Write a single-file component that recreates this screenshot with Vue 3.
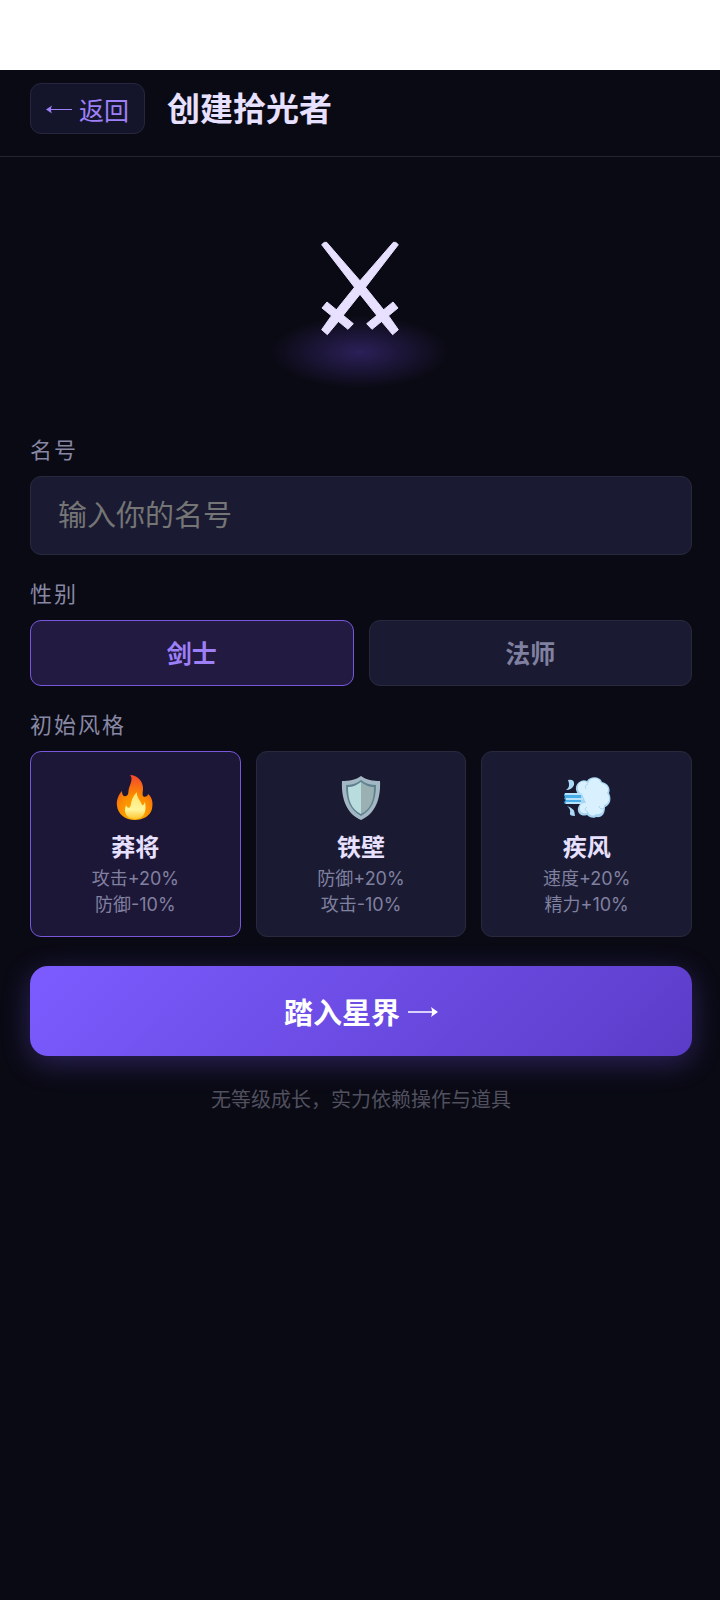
<template>
  <div class="screen">
    <header class="topbar">
      <button class="back-btn" type="button">
        <svg class="back-arrow" viewBox="0 0 26 12" fill="none" stroke="currentColor" stroke-width="1" aria-hidden="true">
          <path d="M2 6.5H26" />
          <path d="M0 6.5L6 2.5Q4 6.5 6 10.5Z" fill="currentColor" stroke="none" />
        </svg>
        <span>返回</span>
      </button>
      <h1 class="title">创建拾光者</h1>
    </header>
    <main>
      <div class="hero">
        <div class="hero-icon">
          <div class="glow"></div>
          <svg class="swords" viewBox="20 17 234 285" fill="currentColor" stroke="currentColor" stroke-width="3" aria-hidden="true">
            <path d="M22 28Q30 18 37 21L148 149L226 246L252 283L235 298L203 260L126 163Z" />
            <path d="M157 265L236 200L251 218L173 282Z" />
            <g transform="translate(274 0) scale(-1 1)">
              <path d="M22 28Q30 18 37 21L148 149L226 246L252 283L235 298L203 260L126 163Z" />
              <path d="M157 265L236 200L251 218L173 282Z" />
            </g>
          </svg>
        </div>
      </div>
      <form class="form" @submit.prevent>
        <div class="field">
          <label class="field-label" for="hero-name">名号</label>
          <input id="hero-name" v-model="name" class="name-input" type="text" placeholder="输入你的名号" autocomplete="off">
        </div>
        <div class="field" role="group" aria-labelledby="gender-label">
          <span id="gender-label" class="field-label">性别</span>
          <div class="gender-row">
            <button
              v-for="item in genders"
              :key="item"
              type="button"
              :class="['gender-btn', { active: gender === item }]"
              :aria-pressed="gender === item"
              @click="gender = item"
            >{{ item }}</button>
          </div>
        </div>
        <div class="field" role="group" aria-labelledby="style-label">
          <span id="style-label" class="field-label">初始风格</span>
          <div class="style-row">
            <button
              v-for="item in styles"
              :key="item.id"
              type="button"
              :class="['style-card', { active: style === item.id }]"
              :aria-pressed="style === item.id"
              @click="style = item.id"
            >
              <svg v-if="item.id === 'fire'" class="style-icon" viewBox="0 0 48 48" aria-hidden="true">
                <defs>
                  <radialGradient id="flame-outer" cx="0.5" cy="0.9" r="0.9">
                    <stop offset="0" stop-color="#ffb300" />
                    <stop offset="0.5" stop-color="#fb8c00" />
                    <stop offset="1" stop-color="#f4452e" />
                  </radialGradient>
                  <linearGradient id="flame-inner" x1="0" y1="0" x2="0" y2="1">
                    <stop offset="0" stop-color="#ffe36a" />
                    <stop offset="0.65" stop-color="#fff59d" />
                    <stop offset="1" stop-color="#ffc42e" />
                  </linearGradient>
                </defs>
                <path fill="url(#flame-outer)" d="M19 1C26 1 32 7 32 14C32 18 31 20 32 22C34 24 37 22 37 20C42 24 42 30 41 35C39 42 32 46 24 46C14 46 7 40 6 32C5 26 8 20 11 17C11 20 12 23 15 22C18 21 17 18 18 14C20 9 22 4 19 1Z" />
                <path fill="url(#flame-inner)" d="M26 18C25 23 30 27 31 31C33 32 33 29 34 28C36 39 32 45 24 45C16 45 12 39 15 31C16 33 17 35 19 33C21 30 19 25 26 18Z" />
              </svg>
              <svg v-else-if="item.id === 'shield'" class="style-icon" viewBox="0 0 48 48" aria-hidden="true">
                <path fill="#a3b8c4" d="M24 2C29 6 36 7 43 7C44 25 38 40 24 46C10 40 4 25 5 7C12 7 19 6 24 2Z" />
                <path fill="#5f828e" d="M24 6C29 10 34 11 39 11C39 26 35 36 24 42C13 36 9 26 9 11C14 11 19 10 24 6Z" />
                <path fill="#b9dcdf" d="M24 8V40C14 35 11 26 11 13C16 13 20 11 24 8Z" />
                <path fill="#9bb0b3" d="M24 8V40C34 35 37 26 37 13C32 13 28 11 24 8Z" />
              </svg>
              <svg v-else class="style-icon" viewBox="0 0 48 48" aria-hidden="true">
                <path fill="#a9d4f1" d="M15 20C11 15 13 9 18 7C20 6 22 6 24 7C27 2 37 2 39 8C45 9 48 15 46 19C49 25 47 31 42 33C42 40 39 44 33 43C30 45 26 43 24 41C18 43 14 39 15 34C16 31 17 30 18 29Z" />
                <path fill="#d9f1fe" d="M19 20C13 17 14 10 18 8C22 6 24 8 25 10C26 3 36 2 38 9C44 10 47 15 44 19C48 24 46 30 41 31C41 38 38 41 33 40C30 43 26 41 25 38C21 41 16 38 17 34C17 30 19 29 23 29Z" />
                <path fill="none" stroke="#a9d4f1" stroke-width="1" d="M25 10C22 11 22 13 23 15M36 32C37 36 41 36 42 32M24 33C21 35 22 37 25 38" />
                <path fill="#48ace9" d="M2 19H18V30H2Q0 28 3 26Q0 25 2 23Q0 21 2 19Z" />
                <path fill="none" stroke="#b7e3ff" stroke-width="2" d="M2 20H19M3 25H20M3 29H19" />
                <path fill="#a9d9f5" d="M5 6Q12 5 11 11Q9 16 3 16Q8 13 5 6ZM4 32Q12 34 12 42Q6 42 7 39Q8 35 4 32Z" />
              </svg>
              <span class="style-name">{{ item.name }}</span>
              <span v-for="line in item.desc" :key="line" class="style-desc">{{ line }}</span>
            </button>
          </div>
        </div>
        <button class="submit-btn" type="submit">
          <span>踏入星界</span>
          <svg class="submit-arrow" viewBox="0 0 30 12" fill="none" stroke="currentColor" stroke-width="1.5" aria-hidden="true">
            <path d="M0 7H28" />
            <path d="M30 7L23 2Q25 7 23 12Z" fill="currentColor" stroke="none" />
          </svg>
        </button>
        <p class="hint">无等级成长，实力依赖操作与道具</p>
      </form>
    </main>
  </div>
</template>

<script setup>
import { ref } from 'vue';

const name = ref('');
const gender = ref('剑士');
const style = ref('fire');

const genders = ['剑士', '法师'];
const styles = [
  { id: 'fire', name: '莽将', desc: ['攻击+20%', '防御-10%'] },
  { id: 'shield', name: '铁壁', desc: ['防御+20%', '攻击-10%'] },
  { id: 'wind', name: '疾风', desc: ['速度+20%', '精力+10%'] },
];
</script>

<style>
body {
  margin: 0;
  background: #fff;
}
</style>

<style scoped>
.screen {
  box-sizing: border-box;
  min-height: calc(100vh - 70px);
  margin-top: 70px;
  background: #0a0a14;
  color: #e8e0ff;
  font-family: Inter, 'Noto Sans CJK SC', sans-serif;
}
.screen :is(button, input) {
  box-sizing: border-box;
  font-family: inherit;
  margin: 0;
}
button {
  cursor: pointer;
}
.topbar {
  display: flex;
  align-items: center;
  gap: 22px;
  padding: 13px 30px 22px;
  border-bottom: 1px solid #262633;
}
.back-btn {
  display: flex;
  align-items: center;
  gap: 7px;
  height: 51px;
  padding: 0 15px;
  border: 1px solid #26273f;
  border-radius: 11px;
  background: #14152a;
  color: #9d80f8;
  font-size: 25px;
}
.back-arrow {
  width: 26px;
  height: 12px;
}
.title {
  margin: 0;
  font-size: 33px;
  line-height: 46px;
  font-weight: 700;
}
.hero {
  display: flex;
  justify-content: center;
  padding: 84px 0 102px;
}
.hero-icon {
  position: relative;
  display: flex;
}
.swords {
  position: relative;
  width: 78px;
  height: 95px;
}
.glow {
  position: absolute;
  left: 50%;
  bottom: -52px;
  width: 176px;
  height: 72px;
  transform: translateX(-50%);
  background: radial-gradient(closest-side, #2c2059, #0a0a14);
}
.form {
  padding: 0 28px 29px 30px;
}
.field {
  margin-bottom: 27px;
}
.field-label {
  display: block;
  margin-bottom: 13px;
  color: #8888a4;
  font-size: 22px;
  line-height: 25px;
  letter-spacing: 2px;
}
.name-input {
  display: block;
  width: 100%;
  height: 79px;
  padding: 0 27px;
  border: 1px solid #29293e;
  border-radius: 11px;
  background: #1a1b32;
  color: #e8e0ff;
  font-size: 29px;
  outline: none;
}
.name-input::placeholder {
  color: #757575;
  opacity: 1;
}
.gender-row {
  display: grid;
  grid-template-columns: repeat(2, 1fr);
  gap: 15px;
}
.gender-btn {
  height: 66px;
  padding: 0 0 2px;
  border: 1px solid #29293e;
  border-radius: 11px;
  background: #1a1b32;
  color: #8080a0;
  font-size: 25px;
  font-weight: 600;
}
.gender-btn.active {
  border-color: #7857dc;
  background: #231a42;
  color: #9d80f8;
}
.style-row {
  display: grid;
  grid-template-columns: repeat(3, 1fr);
  gap: 15px;
}
.style-card {
  display: flex;
  flex-direction: column;
  align-items: center;
  padding: 22px 8px 18px;
  border: 1px solid #29293e;
  border-radius: 11px;
  background: #1a1b32;
}
.style-card.active {
  border-color: #7857dc;
  background: #1d1737;
}
.style-icon {
  width: 48px;
  height: 48px;
  margin-bottom: 9px;
}
.style-name {
  margin-bottom: 1px;
  color: #e8e0ff;
  font-size: 24px;
  line-height: 34px;
  font-weight: 700;
}
.style-desc {
  color: #8080a0;
  font-size: 18px;
  line-height: 26px;
}
.submit-btn {
  display: flex;
  align-items: center;
  justify-content: center;
  gap: 8px;
  width: 100%;
  height: 90px;
  padding: 0;
  border: none;
  border-radius: 18px;
  background: linear-gradient(135deg, #7c5cff, #5b3cc8);
  box-shadow: 0 7px 29px rgba(124, 92, 255, 0.3);
  color: #fff;
  font-size: 29px;
  font-weight: 700;
}
.screen .submit-btn {
  margin-top: 29px;
}
.submit-arrow {
  width: 30px;
  height: 12px;
}
.hint {
  margin: 30px 0 0;
  color: #50505f;
  font-size: 20px;
  line-height: 29px;
  text-align: center;
}
</style>
